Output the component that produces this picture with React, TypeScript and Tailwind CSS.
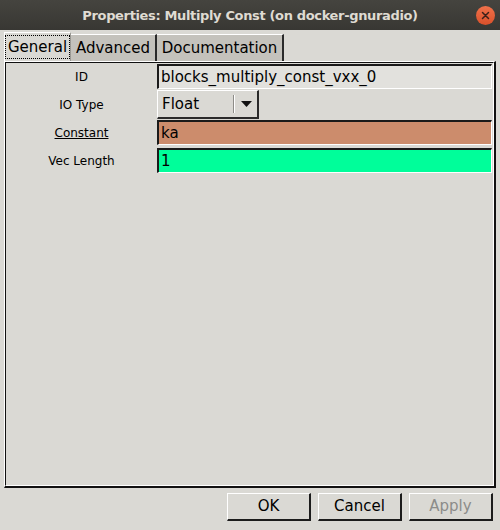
const font = "font-['DejaVu_Sans',sans-serif]";

function Row({ label, underline, children }: { label: string; underline?: boolean; children: React.ReactNode }) {
  return (
    <div className="flex items-stretch">
      <div className="w-[151px] flex items-center justify-center text-[12px] text-black">
        <span className={underline ? "underline" : ""}>{label}</span>
      </div>
      <div className="flex-1">{children}</div>
    </div>
  );
}

function Entry({ value, bg }: { value: string; bg: string }) {
  return (
    <div
      className={`h-[25px] border-t-2 border-l-2 border-t-[#1a1a1a] border-l-[#1a1a1a] border-b border-r border-b-white border-r-white flex items-center pl-[2px] text-[15px] text-black ${bg}`}
    >
      {value}
    </div>
  );
}

function Btn({ label, disabled }: { label: string; disabled?: boolean }) {
  return (
    <div className="w-[84px] h-[28px] border-t border-l border-t-white border-l-white border-b-2 border-r-2 border-b-[#1c1c1c] border-r-[#1c1c1c] bg-[#dad9d4] flex items-center justify-center">
      <span className={`text-[15px] ${disabled ? "text-[#8c8c8a]" : "text-black"}`}>{label}</span>
    </div>
  );
}

export default function App() {
  return (
    <div className={`w-[500px] h-[530px] bg-[#dad9d4] flex flex-col ${font}`}>
      {/* Title bar */}
      <div className="h-[30px] bg-gradient-to-b from-[#45443f] to-[#383733] flex items-center relative">
        <div className="flex-1 text-center text-[13px] font-bold text-[#dfdbd2] tracking-[-0.35px] pt-[1px]">
          Properties: Multiply Const (on docker-gnuradio)
        </div>
        <div className="absolute right-[5px] top-[6px] w-[19px] h-[19px] rounded-full bg-gradient-to-b from-[#f0714a] to-[#d9502a] flex items-center justify-center">
          <svg width="9" height="9" viewBox="0 0 9 9">
            <path d="M1.5 1.5 L7.5 7.5 M7.5 1.5 L1.5 7.5" stroke="#3b2019" strokeWidth="1.5" strokeLinecap="round" />
          </svg>
        </div>
      </div>

      {/* Tabs */}
      <div className="flex items-end pl-[4px] pt-[2px] h-[31px]">
        <div className="h-[29px] w-[67px] bg-[#dad9d4] border-t border-l border-t-white border-l-white border-r border-r-[#9a9994] flex items-center justify-center">
          <span className="text-[15px] text-black outline-1 outline-dotted outline-black px-[2px] leading-[22px]">General</span>
        </div>
        <div className="h-[27px] w-[86px] bg-[#c4c2bc] border-t border-t-white border-r-2 border-r-[#2a2a2a] flex items-center justify-center">
          <span className="text-[15px] text-black">Advanced</span>
        </div>
        <div className="h-[27px] w-[127px] bg-[#c4c2bc] border-t border-t-white border-r-2 border-r-[#2a2a2a] flex items-center justify-center">
          <span className="text-[15px] text-black">Documentation</span>
        </div>
      </div>

      {/* Panel */}
      <div className="mx-[4px] h-[427px] border-t border-l border-t-white border-l-white border-b-2 border-r-2 border-b-[#111] border-r-[#111]">
        <div className="h-full border-t border-l border-t-[#111] border-l-[#111] border-b border-r border-b-white border-r-white pt-[1px] pr-[1px] flex flex-col gap-[1px]">
          <Row label="ID">
            <Entry value="blocks_multiply_const_vxx_0" bg="bg-[#e2e1dd]" />
          </Row>
          <Row label="IO Type">
            <div className="w-[102px] h-[29px] border-t border-l border-t-white border-l-white border-b-2 border-r-2 border-b-[#2a2a2a] border-r-[#2a2a2a] bg-[#dad9d4] flex items-center">
              <span className="flex-1 pl-[4px] text-[15px] text-black">Float</span>
              <div className="w-px h-[18px] bg-[#8e8d88] border-r border-r-white box-content" />
              <div className="w-[22px] flex items-center justify-center">
                <svg width="11" height="6" viewBox="0 0 11 6">
                  <path d="M0 0 L11 0 L5.5 6 Z" fill="#111" />
                </svg>
              </div>
            </div>
          </Row>
          <Row label="Constant" underline>
            <Entry value="ka" bg="bg-[#cc8c6c]" />
          </Row>
          <div className="h-px" />
          <Row label="Vec Length">
            <Entry value="1" bg="bg-[#00fe9a]" />
          </Row>
        </div>
      </div>

      {/* Buttons */}
      <div className="flex justify-end gap-[7px] pr-[7px] pt-[5px]">
        <Btn label="OK" />
        <Btn label="Cancel" />
        <Btn label="Apply" disabled />
      </div>
    </div>
  );
}
